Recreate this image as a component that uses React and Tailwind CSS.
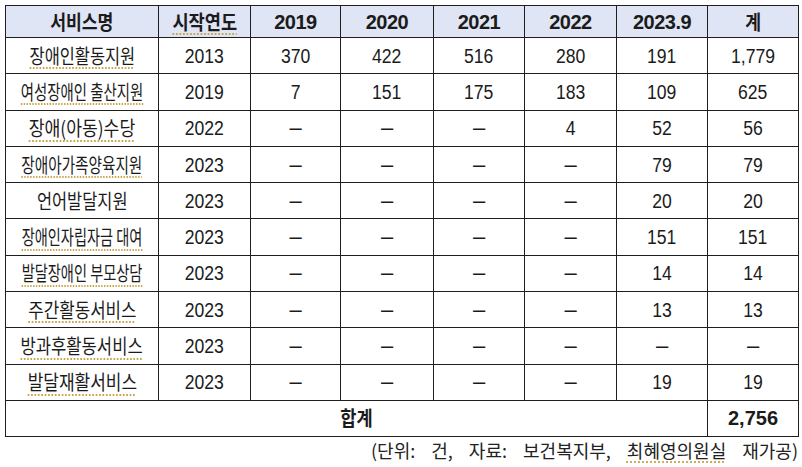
const years = ['2019', '2020', '2021', '2022', '2023.9'];

const rows = [
  { name: '장애인활동지원', start: '2013', v: ['370', '422', '516', '280', '191'], sum: '1,779', sx: 'scale-x-[0.82]', mark: true },
  { name: '여성장애인 출산지원', start: '2019', v: ['7', '151', '175', '183', '109'], sum: '625', sx: 'scale-x-[0.72]', mark: true },
  { name: '장애(아동)수당', start: '2022', v: ['–', '–', '–', '4', '52'], sum: '56', sx: 'scale-x-[0.86]', mark: true },
  { name: '장애아가족양육지원', start: '2023', v: ['–', '–', '–', '–', '79'], sum: '79', sx: 'scale-x-[0.73]', mark: true },
  { name: '언어발달지원', start: '2023', v: ['–', '–', '–', '–', '20'], sum: '20', sx: 'scale-x-[0.82]', mark: false },
  { name: '장애인자립자금 대여', start: '2023', v: ['–', '–', '–', '–', '151'], sum: '151', sx: 'scale-x-[0.71]', mark: true },
  { name: '발달장애인 부모상담', start: '2023', v: ['–', '–', '–', '–', '14'], sum: '14', sx: 'scale-x-[0.71]', mark: true },
  { name: '주간활동서비스', start: '2023', v: ['–', '–', '–', '–', '13'], sum: '13', sx: 'scale-x-[0.84]', mark: true },
  { name: '방과후활동서비스', start: '2023', v: ['–', '–', '–', '–', '–'], sum: '–', sx: 'scale-x-[0.83]', mark: true },
  { name: '발달재활서비스', start: '2023', v: ['–', '–', '–', '–', '19'], sum: '19', sx: 'scale-x-[0.85]', mark: true },
];

const cell = 'border border-[#1e1e1e] text-center p-0 leading-none';
const ko = "font-['Noto_Sans_CJK_KR',sans-serif]";
const squiggle = 'underline decoration-dotted decoration-[#c9a54a] underline-offset-[4px]';

// centred even when the natural width is wider than the cell
function Fit({ className = '', children }) {
  return (
    <div className="flex justify-center whitespace-nowrap">
      <span className={`inline-block ${className}`}>{children}</span>
    </div>
  );
}

function Num({ x }) {
  if (x === '–') return <Fit className="text-[22px]">–</Fit>;
  return <Fit className="scale-x-[0.88]">{x}</Fit>;
}

export default function App() {
  return (
    <div className="w-[802px] h-[467px] bg-white pt-[5px] pl-[5px] font-['Liberation_Sans','Noto_Sans_CJK_KR',sans-serif] text-[#1b1b1b] text-[20px]">
      <table className="border-collapse table-fixed w-[793px]">
        <colgroup>
          <col className="w-[153px]" />
          <col className="w-[92px]" />
          <col className="w-[90px]" />
          <col className="w-[93px]" />
          <col className="w-[91px]" />
          <col className="w-[92px]" />
          <col className="w-[91px]" />
          <col className="w-[91px]" />
        </colgroup>
        <thead>
          <tr className="h-[32px] bg-[#dfe5f4] font-bold">
            <th className={`${cell} ${ko}`}>
              <Fit className="scale-x-[0.86]">서비스명</Fit>
            </th>
            <th className={`${cell} ${ko}`}>
              <Fit className={`scale-x-[0.88] ${squiggle}`}>시작연도</Fit>
            </th>
            {years.map((y) => (
              <th key={y} className={`${cell} tracking-[-0.5px]`}>
                <Fit>{y}</Fit>
              </th>
            ))}
            <th className={`${cell} ${ko}`}>
              <Fit className="scale-x-[0.86]">계</Fit>
            </th>
          </tr>
        </thead>
        <tbody>
          {rows.map((r) => (
            <tr key={r.name} className="h-[36.3px]">
              <td className={`${cell} ${ko}`}>
                <Fit className={`${r.sx} ${r.mark ? squiggle : ''}`}>{r.name}</Fit>
              </td>
              <td className={cell}>
                <Num x={r.start} />
              </td>
              {r.v.map((x, i) => (
                <td key={i} className={cell}>
                  <Num x={x} />
                </td>
              ))}
              <td className={cell}>
                <Num x={r.sum} />
              </td>
            </tr>
          ))}
          <tr className="h-[36px] font-bold">
            <td colSpan={7} className={`${cell} ${ko}`}>
              <Fit className="scale-x-[0.88]">합계</Fit>
            </td>
            <td className={cell}>
              <Fit>2,756</Fit>
            </td>
          </tr>
        </tbody>
      </table>
      <div className={`w-[793px] text-right pt-[2px] text-[18px] text-[#222] ${ko} [word-spacing:12px] leading-[22px]`}>
        (단위: 건, 자료: 보건복지부, <span className={squiggle}>최혜영의원실</span> 재가공)
      </div>
    </div>
  );
}
